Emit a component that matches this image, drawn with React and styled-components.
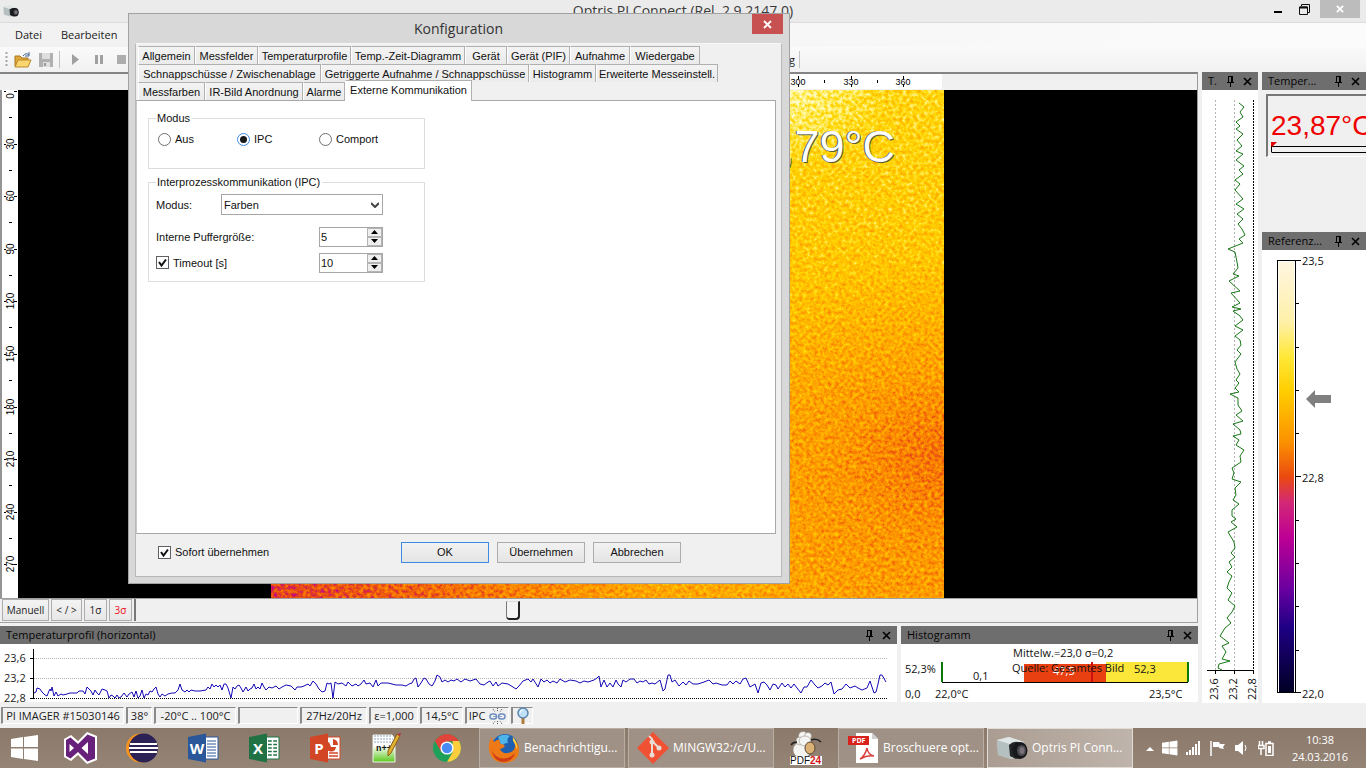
import React from "react";
import styled, { createGlobalStyle, css } from "styled-components";

const UI = '"Open Sans", "Noto Sans", sans-serif';
const FORM = '"Liberation Sans", Arial, sans-serif';

const Global = createGlobalStyle`
  *, *::before, *::after { box-sizing: border-box; }
  body { margin: 0; background: #f0f0f0; color: #1b1b1b; font: 11px/16px ${UI}; overflow: hidden; }
  button, input, select { font: inherit; color: inherit; margin: 0; padding: 0; border-radius: 0; }
  svg { display: block; flex: none; }
`;

/* ---------- window frame ---------- */
const Page = styled.div`
  position: relative;
  display: flex;
  flex-direction: column;
  min-height: 100vh;
  overflow: hidden;
`;
const TitleBar = styled.header`
  display: grid;
  grid-template-columns: 120px 1fr 120px;
  align-items: start;
  height: 23px;
  background: #ebebeb;
  border-bottom: 1px solid #dcdcdc;
`;
const AppIcon = styled.div`padding: 5px 0 0 3px;`;
const WindowTitle = styled.h1`
  margin: 0;
  text-align: center;
  font: 14px/22px ${UI};
  color: #3a3a3a;
  white-space: nowrap;
`;
const WindowControls = styled.div`
  display: flex;
  justify-content: flex-end;
  padding-right: 6px;
`;
const WindowButton = styled.button`
  display: grid;
  place-items: center;
  width: ${(p) => (p.$wide ? 40 : 27)}px;
  height: 18px;
  margin-left: ${(p) => (p.$wide ? 2 : 0)}px;
  border: 0;
  background: ${(p) => (p.$wide ? "#bcbcbc" : "none")};
`;
const MenuBar = styled.nav`
  display: flex;
  align-items: center;
  gap: 19px;
  height: 24px;
  padding-left: 15px;
  background: linear-gradient(90deg, #f1f1f1, #fbfbfb);
`;
const MenuButton = styled.button`
  border: 0;
  background: none;
`;
const ToolBar = styled.div`
  display: flex;
  align-items: center;
  height: 25px;
  padding-left: 5px;
  background: linear-gradient(#fafafa, #f1f1f1);
`;
const ToolButton = styled.button`
  display: grid;
  place-items: center;
  width: ${(p) => p.$w || 23}px;
  height: 23px;
  border: 0;
  background: none;
`;
const ToolSep = styled.i`
  width: 1px;
  height: 17px;
  margin: 0 4px;
  background: #c2c2c2;
`;
const ToolLabel = styled.span`
  width: 662px;
  text-align: right;
`;

/* ---------- main area ---------- */
const Main = styled.main`
  flex: 1;
  display: grid;
  grid-template-columns: minmax(0, 1fr) 56px 104px;
  column-gap: 4px;
`;
const Column = styled.div`
  display: flex;
  flex-direction: column;
  min-width: 0;
  min-height: 0;
`;
const Viewer = styled.section`
  flex: 1;
  display: flex;
  flex-direction: column;
  border-top: 2px solid #848484;
  border-right: 1px solid #9a9a9a;
  min-height: 0;
`;
const RulerTop = styled.div`
  display: flex;
  justify-content: center;
  height: 16px;
  padding-left: 18px;
`;
const ViewRow = styled.div`
  flex: 1;
  display: flex;
  min-height: 508px;
`;
const RulerLeft = styled.div`
  width: 18px;
  background: #fff;
  border-left: 2px solid #949494;
`;
const Black = styled.div`
  flex: 1;
  display: flex;
  justify-content: center;
  background: #000;
`;
const Thermal = styled.div`
  position: relative;
  width: 673px;
  svg { width: 100%; height: 100%; }
`;
const SpotReading = styled.span`
  position: absolute;
  top: 32px;
  right: 49px;
  font: 45px/50px ${FORM};
  color: #fff;
  text-shadow: -1px 0 #465a50, 1px 1px #5a5a3c;
`;
const ScaleRow = styled.div`
  display: flex;
  gap: 2px;
  height: 25px;
  padding: 0 0 0 2px;
  border: 1px solid #a0a0a0;
  border-left: 0;
  margin-bottom: 3px;
`;
const ScaleButton = styled.button`
  width: ${(p) => p.$w}px;
  height: 22px;
  border: 1px solid #adadad;
  background: linear-gradient(#f3f3f3, #e7e7e7);
  color: ${(p) => (p.$red ? "#f01020" : "#222")};
  font-size: 10px;
`;
const Slider = styled.input`
  appearance: none;
  flex: 1;
  min-width: 0;
  height: 22px;
  background: #f0f0f0;
  border-left: 2px solid #777;
  &::-webkit-slider-thumb {
    appearance: none;
    width: 14px;
    height: 19px;
    border: 1px solid #777;
    border-top-color: #ddd;
    border-right: 2px solid #222;
    border-bottom: 2px solid #222;
    border-radius: 0 0 4px 4px;
    background: #f4f4f4;
  }
`;

/* ---------- docked panels ---------- */
const PanelHead = styled.header`
  display: flex;
  align-items: center;
  gap: 8px;
  height: 18px;
  padding: 0 6px;
  background: #6e6e6e;
  color: #050505;
`;
const PanelTitle = styled.h2`
  flex: 1;
  margin: 0;
  font: 11px/18px ${UI};
  white-space: nowrap;
`;
const PanelButton = styled.button`
  width: 9px;
  height: 11px;
  border: 0;
  background: none;
`;
const Bottom = styled.div`
  display: grid;
  grid-template-columns: minmax(0, 1fr) 297px;
  column-gap: 4px;
  padding-bottom: 1px;
`;
const PlotBody = styled.div`
  display: flex;
  height: 58px;
  background: #fff;
`;
const AxisLabels = styled.div`
  display: flex;
  flex-direction: column;
  width: 29px;
  padding: 4px 0 0 4px;
  line-height: 20px;
`;
const PlotSvg = styled.svg`
  flex: 1;
  min-width: 0;
  height: 58px;
`;
const White = styled.div`
  flex: 1;
  background: #fff;
  overflow: hidden;
`;
const SvgText = styled.text`
  font: 11px ${UI};
  fill: ${(p) => p.$fill || "#111"};
`;
const ValueBox = styled.div`
  height: 63px;
  margin: 4px 0 75px 4px;
  padding: 15px 0 0 3px;
  border: 2px solid #777;
  border-right: 0;
  border-bottom: 1px solid #fff;
  overflow: hidden;
`;
const BigValue = styled.output`
  display: block;
  font: 28px/30px ${FORM};
  color: #f00000;
  white-space: nowrap;
`;

/* ---------- status bar ---------- */
const StatusBar = styled.footer`
  display: flex;
  gap: 2px;
  height: 25px;
  padding: 4px 0 4px 1px;
  background: #f0f0f0;
`;
const StatusCell = styled.span`
  display: flex;
  align-items: center;
  justify-content: center;
  gap: 4px;
  width: ${(p) => p.$w}px;
  border: 1px solid #fff;
  border-top-color: #8a8a8a;
  border-left: 2px solid #8a8a8a;
  white-space: nowrap;
`;

/* ---------- taskbar ---------- */
const TaskBar = styled.nav`
  display: flex;
  height: 40px;
  background: linear-gradient(#8b796a, #958577);
  color: #fff;
`;
const TaskIcon = styled.button`
  display: grid;
  place-items: center;
  width: ${(p) => p.$w || 61}px;
  border: 0;
  background: none;
`;
const TaskWindow = styled.button`
  display: flex;
  align-items: center;
  gap: 4px;
  width: 146px;
  margin: 0 1px 0 2px;
  padding-left: 8px;
  border: 1px solid ${(p) => (p.$active ? "#e2dcd7" : "#b9aea4")};
  background: ${(p) => (p.$active ? "linear-gradient(90deg, #aa9c91, #bfb4ab)" : "#9f9185")};
  color: #fff;
  font-size: 12px;
  white-space: nowrap;
`;
const Tray = styled.div`
  display: flex;
  align-items: center;
  gap: 8px;
  margin-left: auto;
  padding-right: 18px;
`;
const Clock = styled.time`
  margin-left: 10px;
  text-align: center;
  line-height: 17px;
`;

/* ---------- dialog ---------- */
const Dialog = styled.section`
  position: absolute;
  left: 128px;
  top: 13px;
  width: 662px;
  padding: 0 7px 6px 6px;
  border: 1px solid #a2a2a2;
  background: #d8d8d8;
  font: 11px/14px ${FORM};
  color: #111;
`;
const DialogHead = styled.header`
  display: flex;
  height: 29px;
`;
const DialogTitle = styled.h2`
  flex: 1;
  margin: 0;
  padding-left: 30px;
  text-align: center;
  font: 14px/30px ${UI};
  color: #333;
`;
const DialogClose = styled.button`
  display: grid;
  place-items: center;
  width: 31px;
  height: 20px;
  margin-right: -1px;
  border: 0;
  background: #c75050;
`;
const Client = styled.div`
  border: 1px solid #b8b8b8;
  border-top-color: #f8f8f8;
  background: #f0f0f0;
  padding: 2px 5px 0 0;
`;
const TabRow = styled.div`
  display: flex;
  align-items: flex-end;
  height: 18px;
  padding-left: 2px;
`;
const Tab = styled.button`
  width: ${(p) => p.$w}px;
  height: 18px;
  border: 1px solid #b0b0b0;
  border-left-color: #fff;
  border-bottom: 0;
  background: linear-gradient(#f3f3f3, #ebebeb);
  text-align: center;
  white-space: nowrap;
  ${(p) =>
    p.$active &&
    css`
      z-index: 1;
      height: 21px;
      margin-bottom: -1px;
      padding-bottom: 2px;
      background: #fff;
    `}
`;
const TabPage = styled.div`
  display: flex;
  flex-direction: column;
  align-items: flex-start;
  gap: 6px;
  min-height: 434px;
  padding: 10px 11px;
  border: 1px solid #a8a8a8;
  border-left-color: #c8c8c8;
  background: #fff;
`;
const Group = styled.fieldset`
  width: 277px;
  height: ${(p) => p.$h}px;
  margin: 0;
  padding: 0 0 0 7px;
  border: 1px solid #dcdcdc;
  legend { padding: 0 2px 0 1px; }
`;
const RadioRow = styled.div`
  display: flex;
  padding: 7px 0 0 2px;
`;
const Option = styled.label`
  display: flex;
  align-items: center;
  gap: 4px;
  width: ${(p) => (p.$w ? p.$w + "px" : "auto")};
`;
const Radio = styled.input.attrs({ type: "radio" })`
  appearance: none;
  display: grid;
  place-items: center;
  width: 13px;
  height: 13px;
  border: 1px solid #707070;
  border-radius: 50%;
  background: #fff;
  &:checked { border-color: #3c8ae6; }
  &:checked::after {
    content: "";
    width: 7px;
    height: 7px;
    border-radius: 50%;
    background: #1a1a1a;
  }
`;
const CheckWrap = styled.span`
  display: grid;
  width: 13px;
  height: 13px;
  > * { grid-area: 1 / 1; }
  svg { pointer-events: none; }
`;
const CheckInput = styled.input.attrs({ type: "checkbox" })`
  appearance: none;
  width: 13px;
  height: 13px;
  border: 1px solid #606060;
  background: #fff;
`;
const FieldRow = styled.div`
  display: flex;
  align-items: center;
  justify-content: space-between;
  width: 227px;
  height: 21px;
  margin-top: ${(p) => p.$mt}px;
`;
const SelectWrap = styled.span`
  display: grid;
  align-items: center;
  width: 162px;
  > * { grid-area: 1 / 1; }
  svg { justify-self: end; margin-right: 4px; pointer-events: none; }
`;
const Select = styled.select`
  appearance: none;
  height: 21px;
  padding-left: 2px;
  border: 1px solid #a6a6a6;
  background: #fff;
`;
const Spin = styled.span`
  display: flex;
  width: 64px;
  height: 20px;
  border: 1px solid #a6a6a6;
  background: #fff;
`;
const SpinInput = styled.input.attrs({ type: "text" })`
  flex: 1;
  min-width: 0;
  padding-left: 1px;
  border: 0;
  background: none;
`;
const SpinButtons = styled.span`
  display: grid;
  width: 15px;
`;
const SpinButton = styled.button`
  display: grid;
  place-items: center;
  border: 1px solid #b4b4b4;
  background: #efefef;
`;
const DialogFoot = styled.footer`
  display: flex;
  align-items: center;
  gap: 8px;
  height: 42px;
  padding: 0 95px 6px 22px;
  label { margin-right: auto; }
`;
const PushButton = styled.button`
  width: 88px;
  height: 21px;
  border: 1px solid ${(p) => (p.$primary ? "#3c8ae6" : "#acacac")};
  background: linear-gradient(#f2f2f2, #e4e4e4);
`;

/* ---------- small drawings ---------- */
const Cross = ({ size = 9, color = "#000", w = 2 }) => (
  <svg width={size} height={size} viewBox="0 0 9 9">
    <path d="M1 1l7 7M8 1l-7 7" stroke={color} strokeWidth={w} />
  </svg>
);
const Pin = () => (
  <svg width="9" height="11" viewBox="0 0 9 11" shapeRendering="crispEdges">
    <path d="M2 0h5v6H2zM3 1v5h2V1z" fillRule="evenodd" />
    <path d="M1 6h7v1H1zM4 7h1v4H4z" />
  </svg>
);
const Tick = () => (
  <svg width="13" height="13" viewBox="0 0 13 13">
    <path d="M3 6l2.500 3.500L10 3.500" fill="none" stroke="#111" strokeWidth="2" />
  </svg>
);
const Camera = ({ w = 32 }) => (
  <svg width={w} height={(w * 24) / 32} viewBox="0 0 32 24">
    <path d="M1 4l12-3 15 5-1 14-12 3L2 19z" fill="#c9d0d0" />
    <path d="M1 4l13 4 1 15L2 19z" fill="#b4c0c0" />
    <path d="M1 4l12-3 15 5-14 2z" fill="#e0e6e6" />
    <path d="M13 9q4-4 9-3l6 3v10l-8 4-6-3z" fill="#222326" />
    <ellipse cx="24" cy="14.500" rx="7.500" ry="8.500" fill="#17181b" />
    <ellipse cx="25.500" cy="14.500" rx="4.500" ry="5.500" fill="#4c4a50" />
    <ellipse cx="26" cy="14.500" rx="2.500" ry="3.500" fill="#7a7078" />
  </svg>
);
const WinLogo = ({ w = 28 }) => (
  <svg width={w} height={w} viewBox="0 0 28 28" fill="#fff">
    <path d="M0 5l12-2v10H0zM13 3l14-2v12H13zM0 14.500h12V25L0 23zM13 14.500h14V27l-14-2z" />
  </svg>
);
const VisualStudio = () => (
  <svg width="34" height="32" viewBox="0 0 34 32">
    <path d="M23 0l10 4v24l-10 4-9-9-7 6-7-4V7l7-4 7 6z" fill="#fff" />
    <path d="M23.500 2.500l7.500 3v21l-7.500 3-9.500-9.500-7.500 6.500-4.500-2.500V8l4.500-2.500L14 12zM24 10l-6.500 6 6.500 6zM5.500 12v8l4.500-4z" fill="#68217a" fillRule="evenodd" />
  </svg>
);
const Eclipse = () => (
  <svg width="34" height="32" viewBox="0 0 34 32">
    <circle cx="15.500" cy="16" r="14.500" fill="#f7941e" />
    <circle cx="18.500" cy="16" r="14.500" fill="#2c2255" />
    <path d="M5 11h27v2H5zM4 15h29v2H4zM5 19h27v2H5z" fill="#fff" />
  </svg>
);
const Office = ({ color, letter, children }) => (
  <svg width="32" height="30" viewBox="0 0 32 30">
    <path d="M17 4h14v22H17z" fill="#fff" stroke={color} />
    {children}
    <path d="M1 4l18-3.500v29L1 26z" fill={color} />
    <text x="10" y="20.500" textAnchor="middle" fontFamily="Open Sans" fontWeight="700" fontSize="15" fill="#fff">{letter}</text>
  </svg>
);
const Notepad = () => (
  <svg width="32" height="32" viewBox="0 0 32 32">
    <defs>
      <linearGradient id="npp" x1="0" y1="0" x2="0" y2="1">
        <stop offset=".4" stopColor="#fff" />
        <stop offset="1" stopColor="#5cc81c" />
      </linearGradient>
    </defs>
    <path d="M3 3h19l3 4v23H3z" fill="url(#npp)" stroke="#eef5e8" />
    <path d="M4 4h18M4 7h19M4 10h19" stroke="#8fa6c0" strokeDasharray="2 1" />
    <text x="6" y="19" fontFamily="Liberation Mono" fontWeight="700" fontSize="9" fill="#111">n++</text>
    <path d="M30 4l-9 17-3 3v-5l9-17z" fill="#e0b030" stroke="#8a5a18" />
    <path d="M27 2l3 2 1-3z" fill="#c03040" />
  </svg>
);
const Chrome = () => (
  <svg width="30" height="30" viewBox="0 0 30 30">
    <circle cx="15" cy="15" r="14" fill="#1fa05a" />
    <path d="M2.900 8A14 14 0 0 1 27.100 8L15 8.500 9 18.500z" fill="#e0443a" />
    <path d="M27.100 8A14 14 0 0 1 15 29l6-10.500L20.500 8z" fill="#fccd3d" />
    <circle cx="15" cy="15" r="6.600" fill="#fff" />
    <circle cx="15" cy="15" r="5.200" fill="#4a8af4" />
  </svg>
);
const Firefox = () => (
  <svg width="32" height="32" viewBox="0 0 32 32">
    <circle cx="17" cy="15" r="13" fill="#1f5fae" />
    <path d="M10 5q6-4 12-1-4 3-2 7-6 0-6 5z" fill="#4fb4e8" />
    <path d="M4 5q0 3 2 5 3-3 6-2-1 3 1 4 3 0 4 2-2 3-5 3 2 5 8 4 6-1 7-6 1-5-3-9 7 4 7 12 0 12-15 13Q3 30 1 18 0 10 4 5z" fill="#ee7a17" />
    <path d="M3 13q0 10 9 13 9 2 15-5-3 9-12 9Q4 29 3 13z" fill="#cf3d14" />
    <path d="M25 5q5 6 4 13-2-7-4-9z" fill="#ffd23c" />
  </svg>
);
const Git = () => (
  <svg width="32" height="32" viewBox="0 0 32 32">
    <path d="M16 0l16 16-16 16L0 16z" fill="#f05133" />
    <path d="M12 4l3 3v18M15 9l6 6" fill="none" stroke="#e8dcd4" strokeWidth="2" />
    <circle cx="15" cy="10" r="2.500" fill="#e8dcd4" />
    <circle cx="15" cy="23" r="2.500" fill="#e8dcd4" />
    <circle cx="22" cy="16" r="2.500" fill="#e8dcd4" />
  </svg>
);
const Sheep = () => (
  <svg width="34" height="36" viewBox="0 0 34 36">
    <g fill="#f4f4f2" stroke="#8a8278" strokeWidth=".5">
      <ellipse cx="13" cy="20" rx="9" ry="8" />
      <circle cx="14" cy="6" r="4.500" />
      <circle cx="19" cy="6" r="3.500" />
      <circle cx="11" cy="11" r="4" />
      <ellipse cx="16" cy="11" rx="6" ry="5" />
    </g>
    <ellipse cx="21" cy="18" rx="5" ry="6" fill="#dcb176" stroke="#5a4630" />
    <path d="M22 10q6-2 10 2M8 12q-4 0-6 3" fill="none" stroke="#222" strokeWidth="1.500" />
    <path d="M1 26h32v9H1z" fill="#fff" />
    <text x="1" y="34" fontFamily="Liberation Sans" fontSize="10" fill="#111">PDF<tspan fill="#d01818" fontWeight="700">24</tspan></text>
  </svg>
);
const PdfIcon = () => (
  <svg width="32" height="32" viewBox="0 0 32 32">
    <path d="M9 1h16l6 6v24H9z" fill="#fff" />
    <path d="M25 1v6h6z" fill="#cfcfcf" />
    <path d="M1 4h21v9H1z" fill="#d8231c" />
    <text x="5" y="11" fontFamily="Open Sans" fontWeight="700" fontSize="7" fill="#fff">PDF</text>
    <path d="M13 27q5-3 7-11 1 7 7 8-7-1-14 3z" fill="none" stroke="#d8403c" strokeWidth="1.500" />
  </svg>
);
const ChainLink = () => (
  <svg width="17" height="16" viewBox="0 0 17 16" fill="none">
    <rect x="1" y="6" width="6.500" height="5" rx="2.500" stroke="#6f8fc0" strokeWidth="1.500" />
    <rect x="9.500" y="6" width="6.500" height="5" rx="2.500" stroke="#6f8fc0" strokeWidth="1.500" />
    <path d="M4 8.500h3M10 8.500h3" stroke="#91a8c8" />
    <path d="M4 1l2 3M8.500 0v4M13 1l-2 3M4 16l2-3M8.500 16v-3M13 16l-2-3" stroke="#555" strokeDasharray="1 1" />
  </svg>
);
const Magnifier = () => (
  <svg width="16" height="17" viewBox="0 0 16 17">
    <path d="M8 11v6" stroke="#b07c38" strokeWidth="3" />
    <circle cx="8" cy="6" r="5" fill="#bfe0f6" stroke="#5c86ac" strokeWidth="1.500" />
    <path d="M5 6q0-3 3-3" stroke="#fff" fill="none" />
  </svg>
);

/* ---------- measured data ---------- */
const horizontal =
  "34,693 36,692 37,688 40,689 42,692 45,695 47,696 49,691 50,689 51,691 52,687 54,696 56,692 58,696 61,694 63,695 67,694 70,693 77,693 79,691 83,691 85,694 87,687 89,689 91,691 93,695 95,690 97,693 99,695 102,689 105,690 107,691 109,698 111,695 113,696 115,698 117,695 119,698 121,697 124,693 127,697 129,694 132,692 134,697 136,691 138,698 140,696 142,690 144,698 146,694 148,695 150,691 152,692 154,689 156,687 158,694 160,697 162,694 165,696 168,694 172,693 175,693 178,690 180,684 182,690 185,692 187,690 189,692 191,690 195,691 200,691 206,690 208,687 210,689 212,684 214,687 216,685 218,687 220,685 222,690 224,684 226,684 228,688 231,698 233,687 235,689 237,686 239,685 241,688 243,692 246,687 248,691 250,689 252,688 254,684 256,689 258,687 260,689 262,683 264,687 266,690 269,687 272,688 276,686 279,689 282,687 286,685 291,686 295,690 297,687 301,687 304,686 308,684 310,686 313,681 316,684 319,689 322,692 325,691 327,683 329,684 331,683 333,698 335,682 338,684 342,683 346,686 348,682 352,686 356,684 358,686 361,684 364,680 366,684 370,683 373,687 376,680 378,686 381,683 388,683 396,685 402,685 406,686 409,684 412,683 414,679 416,678 418,687 421,683 424,678 426,679 429,684 432,686 435,681 437,675 440,677 442,682 445,680 448,682 451,680 454,681 457,679 461,682 465,679 470,681 473,680 476,679 480,684 484,685 488,682 490,681 493,686 496,682 498,686 502,683 508,684 513,687 516,689 519,686 523,681 528,679 531,682 533,679 538,687 541,679 544,682 547,680 550,683 553,681 557,683 560,679 565,682 570,680 576,681 580,683 584,681 588,682 594,680 597,678 599,676 601,687 604,680 607,687 610,683 613,687 616,680 618,684 621,687 623,680 626,682 630,679 634,679 637,683 640,681 643,682 646,680 649,684 652,683 655,684 660,680 663,691 665,689 668,675 670,675 672,682 675,680 679,686 683,682 686,685 689,681 693,684 698,684 704,682 709,680 713,684 716,683 722,685 727,685 730,681 733,684 736,681 740,684 743,679 746,678 750,687 755,684 758,693 761,683 764,682 767,685 770,690 773,684 776,685 778,689 782,683 785,687 788,684 791,688 794,684 797,688 801,693 804,687 807,687 811,680 815,685 818,688 822,686 825,683 828,685 831,682 834,694 838,690 842,689 846,684 850,688 855,686 858,688 862,690 867,688 870,681 874,693 876,692 878,684 880,675 882,675 886,682";
const vertical =
  "1239,103 1244,107 1240,112 1243,117 1236,122 1240,126 1236,129 1243,134 1237,140 1242,146 1236,151 1243,154 1236,160 1244,166 1239,170 1243,174 1235,180 1240,184 1235,190 1243,199 1236,204 1244,209 1237,214 1243,219 1238,224 1242,229 1245,235 1239,239 1243,243 1228,249 1235,252 1237,262 1238,268 1233,274 1239,276 1229,281 1240,291 1231,293 1240,303 1232,307 1241,309 1233,311 1240,316 1243,320 1235,326 1243,330 1235,336 1240,340 1241,345 1237,350 1241,354 1235,362 1237,369 1240,374 1236,380 1239,383 1235,388 1239,392 1230,394 1238,398 1238,405 1242,411 1236,415 1243,421 1233,424 1240,430 1241,434 1233,436 1239,440 1236,445 1244,450 1240,456 1241,462 1232,468 1234,473 1232,479 1241,482 1235,488 1236,495 1233,500 1239,504 1232,510 1232,516 1236,519 1231,522 1237,527 1228,532 1231,537 1234,542 1235,548 1231,553 1235,557 1229,562 1232,567 1227,572 1232,576 1229,582 1227,588 1232,593 1228,600 1235,606 1232,612 1227,618 1231,623 1225,628 1220,636 1229,643 1222,646 1226,652 1222,659 1230,661 1219,664 1218,668 1222,670";

const tasks = [
  { icon: <Office color="#2a579a" letter="W"><path d="M20 8h9M20 11h9M20 14h9M20 17h9M20 20h9M20 23h9" stroke="#2a579a" /></Office>, name: "Word" },
  { icon: <Office color="#207245" letter="X"><path d="M20 8h9M20 11.500h9M20 15h9M20 18.500h9M20 22h9" stroke="#207245" strokeWidth="1.500" /><path d="M24.500 6v18" stroke="#fff" strokeWidth="1.500" /></Office>, name: "Excel" },
  { icon: <Office color="#d24625" letter="P"><path d="M20 9a5 5 0 1 0 7 5h-5z" fill="#d24625" /><path d="M24 6v6h5q0-5-5-6z" fill="#d24625" /><path d="M20 20h9M20 23h9" stroke="#d24625" strokeWidth="1.500" /></Office>, name: "PowerPoint" },
  { icon: <Notepad />, name: "Notepad++" },
  { icon: <Chrome />, name: "Chrome" },
];

const tabRows = [
  [["Allgemein", 57], ["Messfelder", 63], ["Temperaturprofile", 93], ["Temp.-Zeit-Diagramm", 114], ["Gerät", 42], ["Gerät (PIF)", 63], ["Aufnahme", 60], ["Wiedergabe", 70]],
  [["Schnappschüsse / Zwischenablage", 183], ["Getriggerte Aufnahme / Schnappschüsse", 208], ["Histogramm", 67], ["Erweiterte Messeinstell.", 122]],
  [["Messfarben", 67], ["IR-Bild Anordnung", 98], ["Alarme", 42], ["Externe Kommunikation", 127]],
];

const Head = ({ title }) => (
  <PanelHead>
    <PanelTitle>{title}</PanelTitle>
    <PanelButton aria-label="Anheften"><Pin /></PanelButton>
    <PanelButton aria-label="Schließen"><Cross w={1.6} /></PanelButton>
  </PanelHead>
);

const Check = ({ id, children }) => (
  <Option htmlFor={id}>
    <CheckWrap><CheckInput id={id} defaultChecked /><Tick /></CheckWrap>
    {children}
  </Option>
);

const SpinBox = ({ id, value, label }) => (
  <Spin>
    <SpinInput id={id} defaultValue={value} aria-label={label} />
    <SpinButtons>
      <SpinButton aria-label="Mehr"><svg width="7" height="4"><path d="M0 4L3.500 0 7 4z" /></svg></SpinButton>
      <SpinButton aria-label="Weniger"><svg width="7" height="4"><path d="M0 0h7L3.500 4z" /></svg></SpinButton>
    </SpinButtons>
  </Spin>
);

const ThermalImage = () => (
  <svg viewBox="0 0 673 508" preserveAspectRatio="none">
    <defs>
      <linearGradient id="base" x1="0" y1="0" x2="0" y2="1">
        <stop offset="0" stopColor="#cecece" />
        <stop offset=".25" stopColor="#c6c6c6" />
        <stop offset=".6" stopColor="#b8b8b8" />
        <stop offset="1" stopColor="#b0b0b0" />
      </linearGradient>
      <linearGradient id="left" x1="0" y1="0" x2="1" y2="0">
        <stop offset="0" stopColor="#606060" stopOpacity=".62" />
        <stop offset=".25" stopColor="#686868" stopOpacity=".45" />
        <stop offset=".6" stopColor="#707070" stopOpacity="0" />
      </linearGradient>
      <radialGradient id="edge" cx="1" cy=".72" r=".4">
        <stop offset="0" stopColor="#606060" stopOpacity=".4" />
        <stop offset=".4" stopColor="#606060" stopOpacity=".16" />
        <stop offset="1" stopColor="#606060" stopOpacity="0" />
      </radialGradient>
      <radialGradient id="glow" cx=".76" cy="0" r=".16">
        <stop offset="0" stopColor="#fff" stopOpacity=".6" />
        <stop offset="1" stopColor="#fff" stopOpacity="0" />
      </radialGradient>
      <filter id="iron" x="0" y="0" width="100%" height="100%" colorInterpolationFilters="sRGB">
        <feTurbulence type="fractalNoise" baseFrequency=".28" numOctaves="3" seed="7" />
        <feColorMatrix values="1 0 0 0 0  1 0 0 0 0  1 0 0 0 0  0 0 0 0 1" result="n" />
        <feComposite in="SourceGraphic" in2="n" operator="arithmetic" k1="0" k2="1" k3=".34" k4="-.17" />
        <feComponentTransfer>
          <feFuncR type="table" tableValues="0 .08 .25 .5 .76 .9 .98 1 1 1 1" />
          <feFuncG type="table" tableValues="0 0 0 0 0 .26 .5 .68 .84 .95 1" />
          <feFuncB type="table" tableValues=".15 .45 .58 .62 .56 .1 0 0 0 .5 .92" />
          <feFuncA type="linear" slope="0" intercept="1" />
        </feComponentTransfer>
      </filter>
    </defs>
    <g filter="url(#iron)">
      <rect width="673" height="508" fill="url(#base)" />
      <rect width="673" height="508" fill="url(#left)" />
      <rect width="673" height="508" fill="url(#edge)" />
      <rect width="673" height="508" fill="url(#glow)" />
    </g>
  </svg>
);

const TopRuler = () => (
  <svg width="673" height="15" viewBox="0 0 673 15">
    <rect width="671" height="15" fill="#fff" />
    {Array.from({ length: 13 }, (_, i) => {
      const x = Math.round(i * 52.7);
      return (
        <g key={i}>
          <path d={`M${x + 0.5} 2v3m0 5v3${i < 12 ? `M${x + 26.5} 6v3` : ""}`} stroke="#000" />
          {i > 0 && <text x={x} y="11" textAnchor="middle" fontFamily="Liberation Sans" fontSize="9">{i * 30}</text>}
        </g>
      );
    })}
  </svg>
);

const SideRuler = () => (
  <svg width="16" height="508" viewBox="0 0 16 508">
    {Array.from({ length: 10 }, (_, i) => {
      const y = Math.round(i * 52.6) + 1;
      return (
        <g key={i}>
          <path d={`M2 ${y + 0.5}h2m8 0h3${i < 9 ? `M7 ${y + 26.5}h3` : ""}`} stroke="#000" />
          <text transform={`translate(12 ${i ? y : y + 5}) rotate(-90)`} textAnchor="middle" fontFamily="Liberation Sans" fontSize="10">{i * 30}</text>
        </g>
      );
    })}
  </svg>
);

export default function App() {
  return (
    <Page>
      <Global />
      <TitleBar>
        <AppIcon><Camera w={16} /></AppIcon>
        <WindowTitle>Optris PI Connect (Rel. 2.9.2147.0)</WindowTitle>
        <WindowControls>
          <WindowButton aria-label="Minimieren"><svg width="8" height="10"><path d="M0 7h8v2H0z" /></svg></WindowButton>
          <WindowButton aria-label="Wiederherstellen">
            <svg width="11" height="11" fill="none" stroke="#111"><path d="M2.500 2V.5h8v8H9M.5 3h8v7.500h-8z" /><path d="M.5 3.500h8" strokeWidth="2" /></svg>
          </WindowButton>
          <WindowButton $wide aria-label="Schließen"><Cross size={8} color="#fff" /></WindowButton>
        </WindowControls>
      </TitleBar>
      <MenuBar>
        <MenuButton>Datei</MenuButton>
        <MenuButton>Bearbeiten</MenuButton>
      </MenuBar>
      <ToolBar>
        <svg width="3" height="17"><path d="M1.500 1v16" stroke="#a8a8a8" strokeWidth="2" strokeDasharray="2 2" /></svg>
        <ToolButton aria-label="Öffnen" $w={29}>
          <svg width="18" height="16" viewBox="0 0 18 16">
            <path d="M1 4h5l2 2h6v8H1z" fill="#e0a83a" stroke="#a87820" />
            <path d="M4 8h13l-3 7H1z" fill="#fbd670" stroke="#b98a28" />
            <path d="M9 4q3-4 6-1M15 0v4h-4" fill="none" stroke="#3c6492" />
          </svg>
        </ToolButton>
        <ToolButton aria-label="Speichern" $w={18}>
          <svg width="14" height="14" viewBox="0 0 14 14"><path d="M0 0h14v14H0z" fill="#b0b0b0" /><path d="M3 0h8v6H3zM4 9h7v5H4z" fill="#dedede" /><path d="M5 10h2v3H5z" fill="#999" /></svg>
        </ToolButton>
        <ToolSep />
        <ToolButton aria-label="Abspielen"><svg width="7" height="11"><path d="M0 0l7 5.500L0 11z" fill="#a0a0a0" /></svg></ToolButton>
        <ToolButton aria-label="Pause"><svg width="8" height="9"><path d="M0 0h3v9H0zM5 0h3v9H5z" fill="#a0a0a0" /></svg></ToolButton>
        <ToolButton aria-label="Stopp"><svg width="9" height="9"><path d="M0 0h9v9H0z" fill="#adadad" /></svg></ToolButton>
        <ToolLabel>g</ToolLabel>
        <ToolSep />
      </ToolBar>

      <Main>
        <Column>
          <Viewer>
            <RulerTop><TopRuler /></RulerTop>
            <ViewRow>
              <RulerLeft><SideRuler /></RulerLeft>
              <Black>
                <Thermal>
                  <ThermalImage />
                  <SpotReading>,79°C</SpotReading>
                </Thermal>
              </Black>
            </ViewRow>
          </Viewer>
          <ScaleRow>
            <ScaleButton $w={47}>Manuell</ScaleButton>
            <ScaleButton $w={31}>&lt; / &gt;</ScaleButton>
            <ScaleButton $w={23}>1σ</ScaleButton>
            <ScaleButton $w={23} $red>3σ</ScaleButton>
            <Slider type="range" min="0" max="1000" defaultValue="353" aria-label="Temperaturbereich" />
          </ScaleRow>
          <Bottom>
            <section>
              <Head title="Temperaturprofil (horizontal)" />
              <PlotBody>
                <AxisLabels><span>23,6</span><span>23,2</span><span>22,8</span></AxisLabels>
                <PlotSvg viewBox="29 644 868 58" preserveAspectRatio="none">
                  <path d="M34 658.500H888M34 678.500H888" stroke="#b4b4b4" strokeDasharray="1 1" />
                  <path d="M34 698.500H888" stroke="#000" strokeDasharray="1 1" />
                  <path d="M33.500 649v50M30 658.500h3M30 678.500h3M30 698.500h3" stroke="#000" />
                  <polyline points={horizontal} fill="none" stroke="#1408b4" />
                </PlotSvg>
              </PlotBody>
            </section>
            <section>
              <Head title="Histogramm" />
              <PlotBody>
                <svg width="297" height="58" viewBox="901 644 297 58">
                  <path d="M1024 664h82v18h-82z" fill="#e84010" />
                  <path d="M1106 662h82v20h-82z" fill="#fbe63a" />
                  <path d="M942 682.500h246" stroke="#000" />
                  <path d="M942 662v20M1188 662v20" stroke="#0a780a" strokeWidth="2" />
                  <path d="M1092 662v20" stroke="#d01010" strokeWidth="2" />
                  <SvgText x="1053" y="675" $fill="#fff">47,5</SvgText>
                  <SvgText x="1013" y="657">Mittelw.=23,0 σ=0,2</SvgText>
                  <SvgText x="1012" y="672">Quelle: Gesamtes Bild</SvgText>
                  <SvgText x="905" y="673">52,3%</SvgText>
                  <SvgText x="905" y="698">0,0</SvgText>
                  <SvgText x="935" y="698">22,0°C</SvgText>
                  <SvgText x="1149" y="698">23,5°C</SvgText>
                  <SvgText x="973" y="680">0,1</SvgText>
                  <SvgText x="1134" y="673">52,3</SvgText>
                </svg>
              </PlotBody>
            </section>
          </Bottom>
        </Column>

        <Column>
          <Head title="T." />
          <White>
            <svg width="56" height="612" viewBox="1202 90 56 612">
              <path d="M1215.500 100V671M1234.500 100V671" stroke="#b4b4b4" strokeDasharray="2 2" />
              <path d="M1253.500 100V671" stroke="#000" strokeDasharray="2 1" />
              <path d="M1207 670.500h47M1215.500 670v4M1234.500 670v4M1253.500 670v4" stroke="#000" />
              <polyline points={vertical} fill="none" stroke="#187818" />
              {["23,6", "23,2", "22,8"].map((t, i) => (
                <SvgText key={t} transform={`translate(${1218 + i * 19} 700) rotate(-90)`}>{t}</SvgText>
              ))}
            </svg>
          </White>
        </Column>

        <Column>
          <Head title="Temper..." />
          <ValueBox>
            <BigValue>23,87°C</BigValue>
            <svg width="120" height="13" viewBox="2 0 120 13">
              <path d="M2.500 5.500H130M2.500 5v6M2.500 11.500H130" stroke="#000" fill="none" />
              <path d="M0 1h8L3 6z" fill="#e00000" />
            </svg>
          </ValueBox>
          <Head title="Referenz..." />
          <White>
            <svg width="104" height="452" viewBox="1262 250 104 452">
              <defs>
                <linearGradient id="scale" x1="0" y1="0" x2="0" y2="1">
                  <stop offset="0" stopColor="#fff6e0" />
                  <stop offset=".14" stopColor="#fff0a8" />
                  <stop offset=".22" stopColor="#ffe838" />
                  <stop offset=".3" stopColor="#ffce00" />
                  <stop offset=".42" stopColor="#fb9000" />
                  <stop offset=".5" stopColor="#ea4a10" />
                  <stop offset=".56" stopColor="#d22878" />
                  <stop offset=".64" stopColor="#be0094" />
                  <stop offset=".76" stopColor="#6a00a0" />
                  <stop offset=".85" stopColor="#1e0084" />
                  <stop offset="1" stopColor="#000024" />
                </linearGradient>
              </defs>
              <rect x="1277.500" y="260.500" width="18" height="432" fill="#fff" stroke="#000" />
              <rect x="1279" y="262" width="15" height="430" fill="url(#scale)" />
              <path d="M1296 260.500h5M1296 303.500h3M1296 347.500h3M1296 390.500h3M1296 433.500h3M1296 476.500h5M1296 520.500h3M1296 563.500h3M1296 606.500h3M1296 650.500h3M1296 692.500h5" stroke="#000" />
              <SvgText x="1302" y="265">23,5</SvgText>
              <SvgText x="1302" y="482">22,8</SvgText>
              <SvgText x="1302" y="698">22,0</SvgText>
              <path d="M1306 399l9-9v5h16v8h-16v5z" fill="#808080" />
            </svg>
          </White>
        </Column>
      </Main>

      <StatusBar>
        <StatusCell $w={123}>PI IMAGER #15030146</StatusCell>
        <StatusCell $w={26}>38°</StatusCell>
        <StatusCell $w={82}>-20°C .. 100°C</StatusCell>
        <StatusCell $w={60} />
        <StatusCell $w={67}>27Hz/20Hz</StatusCell>
        <StatusCell $w={49}>ε=1,000</StatusCell>
        <StatusCell $w={43}>14,5°C</StatusCell>
        <StatusCell $w={44}>IPC <ChainLink /></StatusCell>
        <StatusCell $w={22}><Magnifier /></StatusCell>
      </StatusBar>

      <TaskBar>
        <TaskIcon $w={50} aria-label="Start"><WinLogo /></TaskIcon>
        <TaskIcon aria-label="Visual Studio"><VisualStudio /></TaskIcon>
        <TaskIcon aria-label="Eclipse"><Eclipse /></TaskIcon>
        {tasks.map((t) => <TaskIcon key={t.name} aria-label={t.name}>{t.icon}</TaskIcon>)}
        <TaskWindow><Firefox />Benachrichtigu...</TaskWindow>
        <TaskWindow><Git />MINGW32:/c/U...</TaskWindow>
        <TaskIcon aria-label="PDF24"><Sheep /></TaskIcon>
        <TaskWindow><PdfIcon />Broschuere opt...</TaskWindow>
        <TaskWindow $active><Camera w={32} />Optris PI Conn...</TaskWindow>
        <Tray>
          <svg width="8" height="5"><path d="M0 5l4-4 4 4z" fill="#fff" /></svg>
          <WinLogo w={16} />
          <svg width="16" height="14" fill="#fff"><path d="M0 11h2v3H0zM3 9h2v5H3zM6 6h2v8H6zM9 3h2v11H9zM12 0h2v14h-2z" /></svg>
          <svg width="16" height="16" viewBox="0 0 16 16"><path d="M1 1v15" stroke="#fff" strokeWidth="1.500" /><path d="M3 2h6l1 2h5l-2 3 1 2-5-1V7H3z" fill="#fff" /></svg>
          <svg width="16" height="16" viewBox="0 0 16 16" fill="none" stroke="#fff"><path d="M1 5h3l5-4v14l-5-4H1z" fill="#fff" stroke="none" /><path d="M11 5q2 3 0 6" /></svg>
          <svg width="16" height="16" viewBox="0 0 16 16" fill="none" stroke="#fff"><path d="M1.500 1v4M4.500 1v4M0 5.500h6v3H0zM3 8v7" strokeWidth="1.500" /><path d="M8 3.500h7v12H8zM10 2h3" strokeWidth="1.500" /><path d="M10 6h3v7h-3z" fill="#fff" stroke="none" /></svg>
          <Clock>10:38<br />24.03.2016</Clock>
        </Tray>
      </TaskBar>

      <Dialog role="dialog" aria-labelledby="dlg-title">
        <DialogHead>
          <DialogTitle id="dlg-title">Konfiguration</DialogTitle>
          <DialogClose aria-label="Schließen"><Cross size={9} color="#fff" w={1.8} /></DialogClose>
        </DialogHead>
        <Client>
          {tabRows.map((row, r) => (
            <TabRow key={r} role="tablist">
              {row.map(([name, w]) => (
                <Tab key={name} role="tab" $w={w} $active={name === "Externe Kommunikation"}>{name}</Tab>
              ))}
            </TabRow>
          ))}
          <TabPage>
            <Group $h={58}>
              <legend>Modus</legend>
              <RadioRow>
                <Option $w={79}><Radio name="mode" />Aus</Option>
                <Option $w={82}><Radio name="mode" defaultChecked />IPC</Option>
                <Option><Radio name="mode" />Comport</Option>
              </RadioRow>
            </Group>
            <Group $h={107}>
              <legend>Interprozesskommunikation (IPC)</legend>
              <FieldRow $mt={5}>
                <label htmlFor="ipc">Modus:</label>
                <SelectWrap>
                  <Select id="ipc"><option>Farben</option></Select>
                  <svg width="8" height="6"><path d="M0 1l4 4 4-4" fill="none" stroke="#444" strokeWidth="2" /></svg>
                </SelectWrap>
              </FieldRow>
              <FieldRow $mt={11}>
                <label htmlFor="buffer">Interne Puffergröße:</label>
                <SpinBox id="buffer" value="5" />
              </FieldRow>
              <FieldRow $mt={5}>
                <Check id="timeout">Timeout [s]</Check>
                <SpinBox id="seconds" value="10" label="Timeout in Sekunden" />
              </FieldRow>
            </Group>
          </TabPage>
          <DialogFoot>
            <Check id="instant">Sofort übernehmen</Check>
            <PushButton $primary>OK</PushButton>
            <PushButton>Übernehmen</PushButton>
            <PushButton>Abbrechen</PushButton>
          </DialogFoot>
        </Client>
      </Dialog>
    </Page>
  );
}
